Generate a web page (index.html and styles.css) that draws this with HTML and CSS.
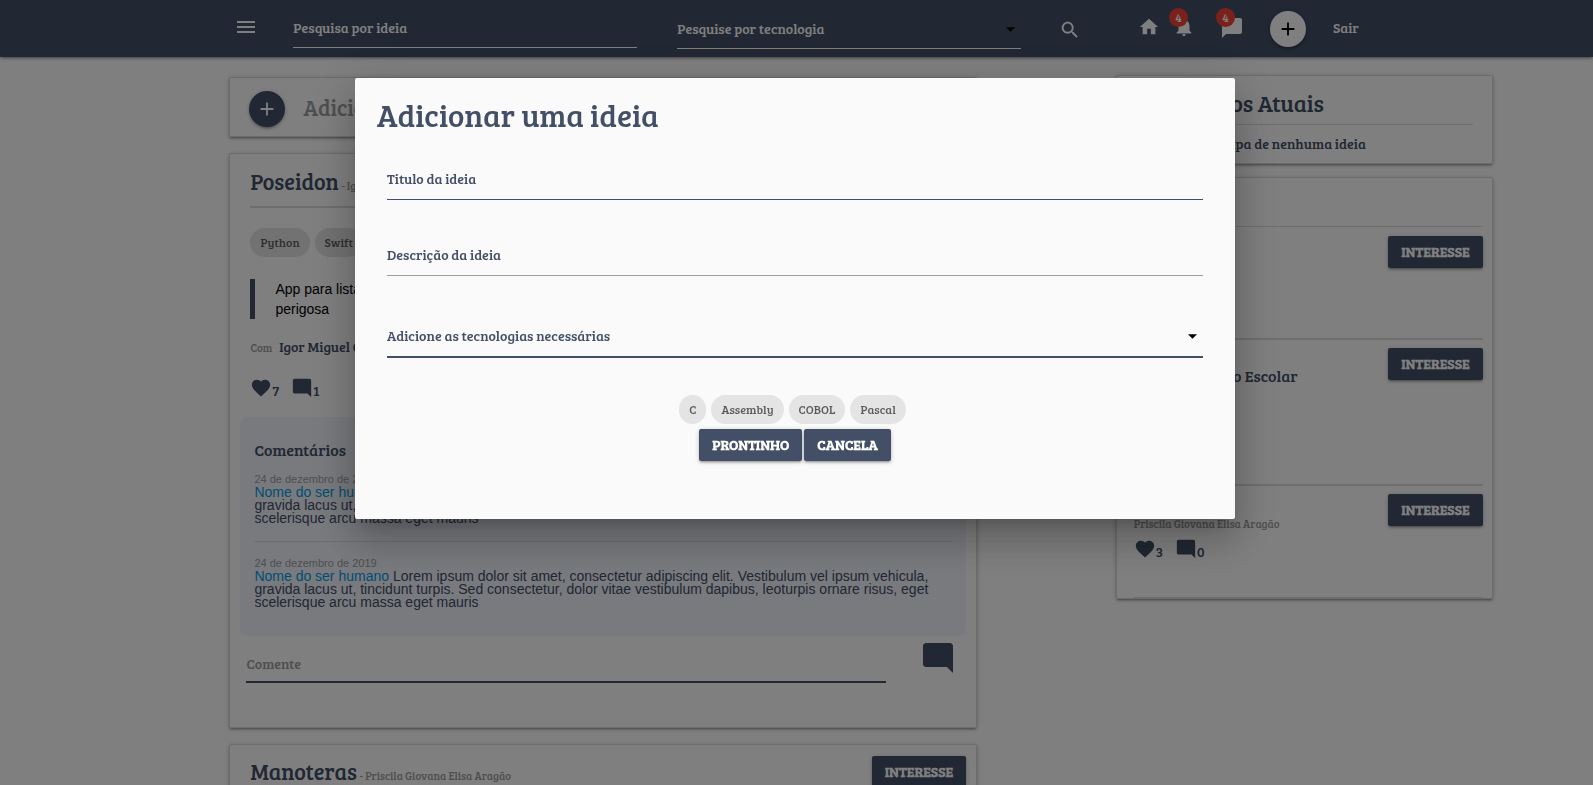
FILE: index.html
```
<!DOCTYPE html>
<html lang="pt-BR">
<head>
<meta charset="utf-8">
<title>Ideias</title>
<meta name="viewport" content="width=device-width, initial-scale=1">
<link rel="stylesheet" href="styles.css">
</head>
<body>
<svg class="sprite" aria-hidden="true">
  <symbol id="heart" viewBox="0 0 24 24"><path d="M12 21.35l-1.45-1.32C5.4 15.36 2 12.28 2 8.5 2 5.42 4.42 3 7.5 3c1.74 0 3.41.81 4.5 2.09C13.09 3.81 14.76 3 16.5 3 19.58 3 22 5.42 22 8.5c0 3.78-3.4 6.86-8.55 11.54L12 21.35z"/></symbol>
  <symbol id="comment" viewBox="0 0 24 24"><path d="M21.99 4c0-1.1-.89-2-1.99-2H4c-1.1 0-2 .9-2 2v12c0 1.1.9 2 2 2h14l4 4-.01-18z"/></symbol>
  <symbol id="plus" viewBox="0 0 24 24"><path d="M19 13h-6v6h-2v-6H5v-2h6V5h2v6h6v2z"/></symbol>
  <symbol id="caret" viewBox="0 0 10 5"><path d="M0 0h10L5 5z"/></symbol>
</svg>

<header class="topbar">
  <button class="icon-button" aria-label="Menu"><svg class="icon" viewBox="0 0 24 24"><path d="M3 18h18v-2H3v2zm0-5h18v-2H3v2zm0-7v2h18V6H3z"/></svg></button>
  <input class="line-input topbar-search" type="text" placeholder="Pesquisa por ideia" aria-label="Pesquisa por ideia">
  <div class="select-wrap topbar-select">
    <select class="line-input" aria-label="Pesquise por tecnologia"><option>Pesquise por tecnologia</option></select>
    <svg class="caret"><use href="#caret"/></svg>
  </div>
  <nav class="topnav">
    <button class="icon-button nav-search" aria-label="Pesquisar"><svg class="icon" viewBox="0 0 24 24"><path d="M15.5 14h-.79l-.28-.27C15.41 12.59 16 11.11 16 9.5 16 5.91 13.09 3 9.5 3S3 5.91 3 9.5 5.91 16 9.5 16c1.61 0 3.09-.59 4.23-1.57l.27.28v.79l5 4.99L20.49 19l-4.99-5zm-6 0C7.01 14 5 11.99 5 9.5S7.01 5 9.5 5 14 7.01 14 9.5 11.99 14 9.5 14z"/></svg></button>
    <a class="nav-home" href="#" aria-label="Início"><svg class="icon" viewBox="0 0 24 24"><path d="M10 20v-6h4v6h5v-8h3L12 3 2 12h3v8z"/></svg></a>
    <a class="nav-alert" href="#" aria-label="Notificações"><svg class="icon" viewBox="0 0 24 24"><path d="M12 22c1.1 0 2-.9 2-2h-4c0 1.1.89 2 2 2zm6-6v-5c0-3.07-1.64-5.64-4.5-6.32V4c0-.83-.67-1.5-1.5-1.5s-1.5.67-1.5 1.5v.68C7.63 5.36 6 7.92 6 11v5l-2 2v1h16v-1l-2-2z"/></svg><span class="badge">4</span></a>
    <a class="nav-alert nav-chat" href="#" aria-label="Mensagens"><svg class="icon" viewBox="0 0 24 24"><path d="M20 2H4c-1.1 0-1.99.9-1.99 2L2 22l4-4h14c1.1 0 2-.9 2-2V4c0-1.1-.9-2-2-2z"/></svg><span class="badge">4</span></a>
    <button class="round round-light" aria-label="Adicionar"><svg class="icon"><use href="#plus"/></svg></button>
    <a class="nav-exit" href="#">Sair</a>
  </nav>
</header>

<main class="page">
  <div class="column">
    <section class="card new-idea">
      <button class="round" aria-label="Adicionar uma ideia"><svg class="icon"><use href="#plus"/></svg></button>
      <span class="new-idea-text">Adicionar uma ideia</span>
    </section>

    <article class="card idea">
      <h2 class="idea-title">Poseidon <small>- Igor Miguel</small></h2>
      <div class="chips idea-chips"><span class="chip">Python</span><span class="chip">Swift</span></div>
      <blockquote class="quote">App para listar<br>perigosa</blockquote>
      <p class="team"><small>Com</small> Igor Miguel Costa</p>
      <div class="stats">
        <button class="stat"><svg class="icon"><use href="#heart"/></svg>7</button>
        <button class="stat"><svg class="icon"><use href="#comment"/></svg>1</button>
      </div>
      <section class="comments">
        <h3 class="comments-title">Comentários</h3>
        <div class="comment">
          <time>24 de dezembro de 2019</time>
          <p><a href="#">Nome do ser humano</a> Lorem ipsum dolor sit amet, consectetur adipiscing elit. Vestibulum vel ipsum vehicula, gravida lacus ut, tincidunt turpis. Sed consectetur, dolor vitae vestibulum dapibus, leoturpis ornare risus, eget scelerisque arcu massa eget mauris</p>
        </div>
        <div class="comment">
          <time>24 de dezembro de 2019</time>
          <p><a href="#">Nome do ser humano</a> Lorem ipsum dolor sit amet, consectetur adipiscing elit. Vestibulum vel ipsum vehicula, gravida lacus ut, tincidunt turpis. Sed consectetur, dolor vitae vestibulum dapibus, leoturpis ornare risus, eget scelerisque arcu massa eget mauris</p>
        </div>
      </section>
      <form class="reply">
        <input class="line-input" type="text" placeholder="Comente" aria-label="Comente">
        <button class="icon-button" type="button" aria-label="Enviar comentário"><svg class="icon"><use href="#comment"/></svg></button>
      </form>
    </article>

    <article class="card idea idea-next">
      <h2 class="idea-title">Manoteras <small>- Priscila Giovana Elisa Aragão</small></h2>
      <button class="button">INTERESSE</button>
    </article>
  </div>

  <aside class="column side">
    <section class="card current">
      <h2>Os Projetos Atuais</h2>
      <p>Você não participa de nenhuma ideia</p>
    </section>
    <section class="card trending">
      <div class="trend trend-first"><button class="button">INTERESSE</button></div>
      <div class="trend trend-second"><h3>Financiamento Escolar</h3><button class="button">INTERESSE</button></div>
      <div class="trend trend-third">
        <div class="trend-body">
          <small>Priscila Giovana Elisa Aragão</small>
          <div class="stats">
            <button class="stat"><svg class="icon"><use href="#heart"/></svg>3</button>
            <button class="stat"><svg class="icon"><use href="#comment"/></svg>0</button>
          </div>
        </div>
        <button class="button">INTERESSE</button>
      </div>
    </section>
  </aside>
</main>

<div class="overlay">
  <form class="modal" role="dialog" aria-labelledby="modal-title">
    <h1 id="modal-title">Adicionar uma ideia</h1>
    <div class="fields">
      <input class="line-input" type="text" placeholder="Titulo da ideia" aria-label="Titulo da ideia">
      <input class="line-input muted" type="text" placeholder="Descrição da ideia" aria-label="Descrição da ideia">
      <div class="select-wrap">
        <select class="line-input" aria-label="Adicione as tecnologias necessárias"><option>Adicione as tecnologias necessárias</option></select>
        <svg class="caret"><use href="#caret"/></svg>
      </div>
    </div>
    <div class="chips"><span class="chip">C</span><span class="chip">Assembly</span><span class="chip">COBOL</span><span class="chip">Pascal</span></div>
    <div class="actions">
      <button class="button" type="button">PRONTINHO</button>
      <button class="button" type="button">CANCELA</button>
    </div>
  </form>
</div>
</body>
</html>
```
FILE: styles.css
```
:root {
  --navy: #424f66;
  --slab: "Bree Serif", "DejaVu Serif Condensed", "DejaVu Serif", serif;
  --sans: "Liberation Sans", Arial, sans-serif;
  --shadow: 0 2px 2px 0 rgba(0,0,0,.14), 0 3px 1px -2px rgba(0,0,0,.12), 0 1px 5px 0 rgba(0,0,0,.2);
}
* { box-sizing: border-box; }
body { margin: 0; height: 100vh; overflow: hidden; background: #fff; color: var(--navy); font: 14px/20px var(--slab); }
h1, h2, h3, p, blockquote { margin: 0; font-weight: 400; }
a { color: inherit; text-decoration: none; }
button { font-family: inherit; color: inherit; border: 0; background: none; padding: 0; }
.sprite { position: absolute; width: 0; height: 0; }
.icon { display: block; width: 22px; height: 22px; fill: currentColor; }

.line-input { width: 100%; min-width: 0; border: 0; border-bottom: 1px solid var(--navy); border-radius: 0; outline: 0; padding: 0; background: transparent; color: var(--navy); font: 14px/20px var(--slab); appearance: none; }
.line-input::placeholder { color: inherit; opacity: 1; }
.select-wrap { display: grid; align-items: center; }
.select-wrap > * { grid-area: 1 / 1; }
.caret { width: 9px; height: 5px; justify-self: end; margin-right: 6px; fill: #000; pointer-events: none; }

.button { height: 32px; padding: 0 13px; border-radius: 2px; background: var(--navy); color: #fff; font: bold 14px/32px var(--slab); box-shadow: var(--shadow); white-space: nowrap; }
.round { display: flex; align-items: center; justify-content: center; flex: none; width: 36px; height: 36px; border-radius: 50%; background: var(--navy); color: #fff; box-shadow: var(--shadow); }
.round-light { background: #fff; color: #000; }
.chips { display: flex; gap: 5px; padding-right: 5px; }
.chip { height: 29px; padding: 0 10px; border-radius: 15px; background: #e4e4e4; color: rgba(0,0,0,.6); font-size: 12px; line-height: 29px; }

.topbar { display: grid; grid-template-columns: 56fr 344fr 40fr 344fr 38fr 299fr; height: 57px; padding: 0 14.7% 0 14.9%; background: var(--navy); color: #fff; box-shadow: var(--shadow); }
.topbar .line-input { height: 40px; border-color: #fff; color: #fff; }
.topbar > .icon-button { margin: 15px 0 0 -3px; align-self: start; }
.topbar > .icon-button .icon, .nav-chat .icon { width: 24px; height: 24px; }
.topbar-search { grid-column: 2; margin-top: 8px; }
.topbar-select { grid-column: 4; margin-top: 9px; align-self: start; }
.topnav { grid-column: 6; display: flex; align-items: flex-start; }
.nav-search { margin: 19px 57px 0 0; }
.nav-home { margin: 16px 13px 0 0; }
.nav-alert { position: relative; margin: 16px 25px 0 0; }
.badge { position: absolute; top: -8px; left: -4px; width: 19px; height: 19px; border-radius: 50%; background: #f44336; font-size: 12px; line-height: 19px; text-align: center; }
.topnav .round { margin: 11px 0 0 1px; }
.nav-exit { margin: 18px 0 0 27px; }

.page { display: grid; grid-template-columns: 746fr 376fr; column-gap: 8.7vw; align-items: start; padding: 18px 6.3% 0 14.4%; }
.column { display: grid; gap: 16px; padding-top: 2px; }
.side { gap: 13px; padding-top: 0; }
.card { border: 1px solid #d8d8dd; border-radius: 2px; background: #fff; box-shadow: var(--shadow); }
.new-idea { display: flex; align-items: center; gap: 18px; height: 60px; padding: 4px 19px 0; }
.new-idea-text { padding-bottom: 4px; color: #9e9e9e; font-size: 22px; line-height: 28px; white-space: nowrap; overflow: hidden; }
.idea { padding: 13px 10px 44px; }
.idea-title { margin: 0 10px; padding-bottom: 6px; border-bottom: 2px solid #dcdcdc; font-size: 22px; line-height: 28px; }
small { color: #9e9e9e; font-size: 11px; }
.idea-title small { margin-left: -2px; }
.idea-chips { margin: 20px 10px 22px; }
.quote { margin: 0 10px; padding-left: 20px; border-left: 5px solid var(--navy); color: #000; font-family: var(--sans); }
.team { margin: 18px 10px 19px; }
.team small { margin-right: 4px; }
.stats { display: flex; gap: 12px; }
.idea .stats { margin: 0 10px 18px; }
.stat { display: flex; align-items: flex-end; font-size: 14px; line-height: 16px; }
.comments { padding: 23px 14px 27px; border-radius: 8px; background: #f1f4fc; font-family: var(--sans); }
.comments-title { margin-bottom: 13px; font: 16px/20px var(--slab); }
.comment { line-height: 13px; }
.comment p { padding-right: 10px; line-height: 13px; }
.comment time { display: block; color: #9e9e9e; font-size: 11px; }
.comment a { color: #039be5; }
.comment + .comment { margin-top: 16px; padding-top: 15px; border-top: 1px solid #dcdcdc; }
.reply { display: grid; grid-template-columns: 639fr 80fr; padding: 4px 0 0 6px; }
.reply .line-input { height: 38px; margin-top: 5px; border-bottom-width: 2px; }
.reply .line-input::placeholder { color: #9e9e9e; }
.reply .icon-button { justify-self: end; align-self: start; margin-right: 10px; }
.reply .icon { width: 36px; height: 36px; }
.idea-next { display: flex; justify-content: space-between; align-items: flex-start; padding: 11px 10px 60px; }
.idea-next .idea-title { margin-top: 1px; border: 0; }

.current { padding: 13px 19px 9px 18px; }
.current h2 { padding: 0 0 7px 4px; border-bottom: 1px solid #dcdcdc; font-size: 23px; line-height: 28px; white-space: nowrap; }
.current p { padding-top: 9px; white-space: nowrap; }
.trending { padding: 48px 9px 0 17px; }
.trend { display: flex; justify-content: space-between; align-items: flex-start; padding-top: 9px; border-top: 1px solid #dcdcdc; }
.trend .button { margin-left: auto; }
.trend-first { height: 112px; }
.trend-second { height: 146px; padding-top: 8px; border-top-width: 2px; }
.trend-second h3 { margin-top: 18px; font-size: 16px; white-space: nowrap; }
.trend-third { padding-top: 8px; border-top-width: 2px; border-bottom: 1px solid #dcdcdc; padding-bottom: 37px; }
.trend-body { display: grid; gap: 4px; padding-top: 20px; }

.overlay { position: fixed; inset: 0; display: grid; grid-template-columns: 355fr 880fr 358fr; align-items: start; padding-top: 78px; background: rgba(0,0,0,.5); }
.modal { grid-column: 2; padding: 17px 22px 58px; border-radius: 2px; background: #fafafa; box-shadow: 0 24px 38px 3px rgba(0,0,0,.14), 0 9px 46px 8px rgba(0,0,0,.12), 0 11px 15px -7px rgba(0,0,0,.2); }
.modal h1 { font-size: 31px; line-height: 40px; }
.fields { display: grid; gap: 29px; padding: 18px 10px 37px; }
.fields .line-input { height: 47px; padding-top: 4px; }
.fields .muted { border-color: #9e9e9e; }
.fields .select-wrap { margin-top: 5px; }
.fields select.line-input { height: 48px; padding-top: 6px; border-bottom-width: 2px; }
.fields .caret { margin-top: 4px; }
.modal .chips, .actions { display: flex; justify-content: center; }
.actions { gap: 2px; margin-top: 5px; }
```
